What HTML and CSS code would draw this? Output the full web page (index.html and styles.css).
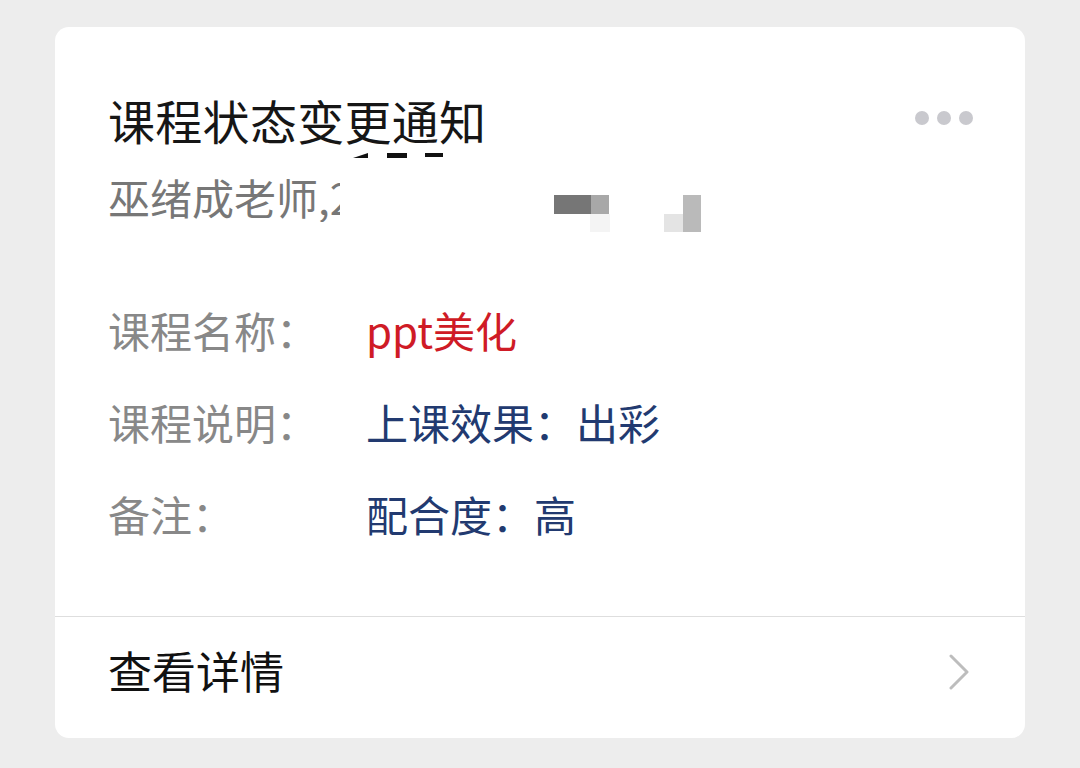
FILE: index.html
```html
<!DOCTYPE html>
<html lang="zh-CN">
<head>
<meta charset="utf-8">
<title>课程状态变更通知</title>
<link rel="stylesheet" href="styles.css">
</head>
<body>
<div class="card">
  <div class="card-body">
    <div class="header">
      <h1 class="title">课程状态变更通知</h1>
      <div class="more"><span class="dot"></span><span class="dot"></span><span class="dot"></span></div>
    </div>
    <div class="subtitle">
      <span class="sub-text">巫绪成老师,2</span>
      <span class="mosaic m1"></span>
      <span class="mosaic m2"></span>
      <span class="mosaic m3"></span>
      <span class="pix p1"></span>
      <span class="pix p2"></span>
      <span class="pix p3"></span>
      <span class="pix p4"></span>
      <span class="pix p5"></span>
    </div>
    <div class="rows">
      <div class="row"><span class="label">课程名称：</span><span class="value red">ppt美化</span></div>
      <div class="row"><span class="label">课程说明：</span><span class="value navy">上课效果：出彩</span></div>
      <div class="row"><span class="label">备注：</span><span class="value navy">配合度：高</span></div>
    </div>
  </div>
  <div class="footer">
    <span class="footer-text">查看详情</span>
    <svg class="chevron" width="22" height="36" viewBox="0 0 22 36"><path d="M3 2 L19 18 L3 34" fill="none" stroke="#bdbdbd" stroke-width="3" stroke-linecap="round" stroke-linejoin="round"/></svg>
  </div>
</div>
</body>
</html>
```

FILE: styles.css
```css
* { box-sizing: border-box; }
html, body {
  margin: 0;
  padding: 0;
  background: #ededed;
  width: 1080px;
  height: 768px;
  overflow: hidden;
  font-family: "Noto Sans CJK SC", "Noto Sans", sans-serif;
}
body {
  padding: 27px 55px 0 55px;
}
.card {
  width: 970px;
  height: 711px;
  background: #fff;
  border-radius: 14px;
  display: flex;
  flex-direction: column;
  overflow: hidden;
}
.card-body {
  padding: 65px 53px 0 53px;
  height: 590px;
  border-bottom: 1.5px solid #dedede;
}
.header {
  display: flex;
  align-items: center;
  justify-content: space-between;
  height: 56px;
}
.title {
  margin: 0;
  font-size: 47px;
  font-weight: 400;
  color: #161616;
  line-height: 56px;
  letter-spacing: 0.3px;
}
.more {
  display: flex;
  gap: 8px;
  margin-right: -1px;
  margin-top: -4px;
}
.dot {
  width: 14px;
  height: 14px;
  border-radius: 50%;
  background: #c9c9ce;
}
.subtitle {
  position: relative;
  margin-top: 24px;
  height: 50px;
  line-height: 50px;
  font-size: 42px;
  color: #777;
}
.sub-text {
  display: inline-block;
  width: 232px;
  overflow: hidden;
  white-space: nowrap;
  vertical-align: top;
}
.mosaic, .pix {
  position: absolute;
  display: block;
}
.mosaic { background: #111; top: -19px; height: 5px; }
.m1 { left: 245px; width: 15px; clip-path: polygon(100% 0, 100% 100%, 0 100%); }
.m2 { left: 279px; width: 20px; }
.m3 { left: 317px; width: 18px; height: 4px; }
.p1 { left: 446px; top: 23px; width: 37px; height: 19px; background: #767676; }
.p2 { left: 483px; top: 23px; width: 18px; height: 19px; background: #a8a8a8; }
.p3 { left: 482px; top: 42px; width: 20px; height: 18px; background: #f4f4f4; }
.p4 { left: 556px; top: 42px; width: 19px; height: 18px; background: #e4e4e4; }
.p5 { left: 575px; top: 23px; width: 18px; height: 37px; background: #bababa; }
.rows {
  margin-top: 62px;
}
.row {
  display: flex;
  height: 92px;
  align-items: center;
  font-size: 42px;
  line-height: 50px;
}
.label {
  width: 258px;
  color: #888;
  flex-shrink: 0;
}
.value { white-space: nowrap; }
.red { color: #cf1b26; }
.navy { color: #223a70; }
.footer {
  flex: 1;
  display: flex;
  align-items: center;
  justify-content: space-between;
  padding: 0 55px 16px 53px;
}
.footer-text {
  font-size: 44px;
  line-height: 50px;
  color: #111;
}
.chevron {
  display: block;
  margin-top: 4px;
}
```
